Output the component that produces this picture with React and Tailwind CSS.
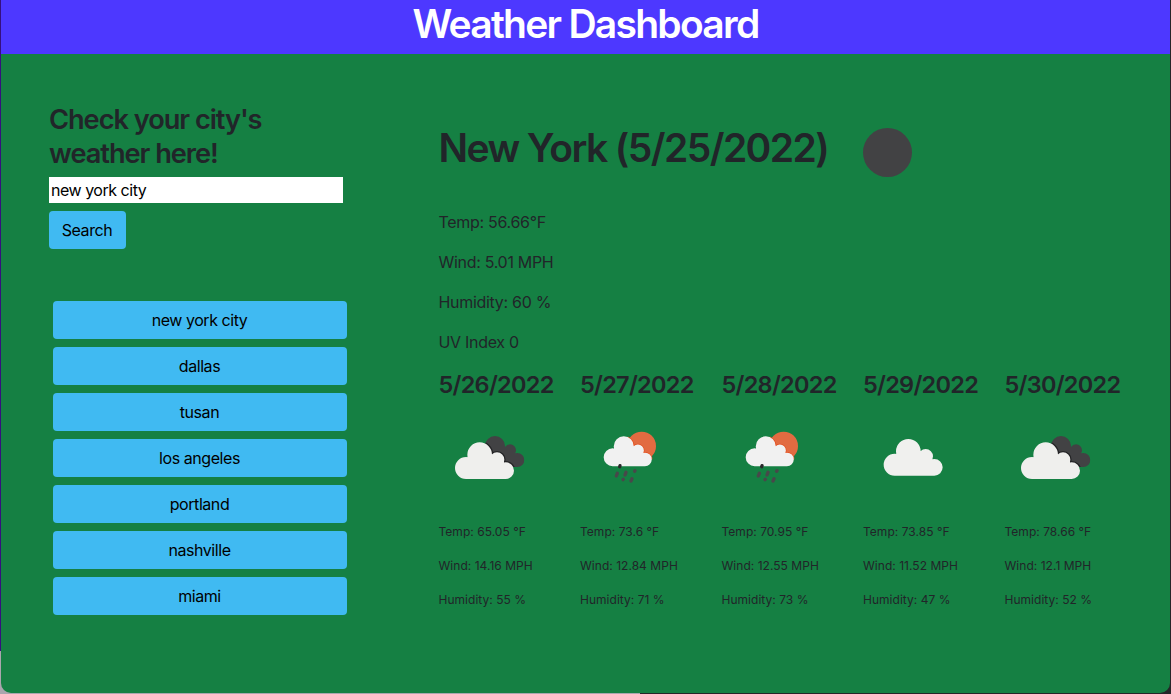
const cities = ["new york city", "dallas", "tusan", "los angeles", "portland", "nashville", "miami"];

const forecast = [
  { date: "5/26/2022", icon: "broken", temp: "65.05", wind: "14.16", humidity: 55 },
  { date: "5/27/2022", icon: "rain", temp: "73.6", wind: "12.84", humidity: 71 },
  { date: "5/28/2022", icon: "rain", temp: "70.95", wind: "12.55", humidity: 73 },
  { date: "5/29/2022", icon: "cloud", temp: "73.85", wind: "11.52", humidity: 47 },
  { date: "5/30/2022", icon: "broken", temp: "78.66", wind: "12.1", humidity: 52 },
];

/* Four puffs, then the body that joins them. */
const CLOUD =
  "M0 77a33 33 0 1 1 66 0a33 33 0 1 1 -66 0Z M37 37a37 37 0 1 1 74 0a37 37 0 1 1 -74 0Z M104 52a22 22 0 1 1 44 0a22 22 0 1 1 -44 0Z M127 85a25 25 0 1 1 50 0a25 25 0 1 1 -50 0Z M33 110V77L74 37L126 52L152 85V110Z";

/* Every icon is drawn in a 300x300 box, three units to a pixel. */
function WeatherIcon({ kind }) {
  return (
    <svg className="size-[100px]" viewBox="0 0 300 300" aria-hidden="true">
      {kind === "broken" && (
        <>
          <clipPath id="backCloud">
            <circle cx="168" cy="108" r="30" />
            <circle cx="213" cy="121" r="18" />
            <circle cx="235" cy="150" r="21" />
            <path d="M168 108L213 121L235 150V171H168Z" />
          </clipPath>
          <g clipPath="url(#backCloud)">
            <rect x="120" y="60" width="160" height="120" fill="#424244" />
            <path d={CLOUD} transform="translate(48 97)" fill="#242426" stroke="#242426" strokeWidth="8" />
          </g>
          <path d={CLOUD} transform="translate(48 97)" fill="#efefed" />
        </>
      )}
      {kind === "rain" && (
        <>
          <circle cx="185" cy="108" r="43" fill="#e26b41" />
          <path d={CLOUD} transform="translate(71 79) scale(.815)" fill="#f1f1f1" stroke="#e45222" strokeWidth="5" clipPath="url(#sunSide)" />
          <path d={CLOUD} transform="translate(71 79) scale(.815)" fill="#f1f1f1" />
          <g stroke="#48484a" strokeWidth="10" strokeLinecap="round">
            <path d="M120 167l-1 3" stroke="#29292b" />
            <path d="M112 190l-3 8M138 187l-3 8M165 182l-1 2M130 208l-1 1M156 206l-3 7" />
          </g>
          <clipPath id="sunSide">
            <path d="M100 -10H200V85H80V10Z" />
          </clipPath>
        </>
      )}
      {kind === "cloud" && <path d={CLOUD} transform="translate(62 87)" fill="#f0f0ee" />}
    </svg>
  );
}

export default function App() {
  return (
    <div className="flex h-[694px] w-[1171px] overflow-hidden bg-[#252528] bg-[linear-gradient(to_right,#aaa6ae_640px,#252528_640px)] font-['Inter',sans-serif] text-[#212529]">
      <div className="h-[651px] w-px bg-[#35107f]" />
      <div className="flex h-[693px] w-[1169px] flex-col overflow-hidden rounded-b-[10px] bg-[#158043]">
        <header className="h-[54px] shrink-0 bg-[#4d38ff] text-center">
          <h1 className="text-[39px] leading-[48px] font-[560] tracking-[-1.73px] text-white">Weather Dashboard</h1>
        </header>
        <main className="flex">
          <aside className="ml-12 w-[298px] pt-[49px]">
            <h2 className="text-[27.2px] leading-[33.6px] font-[560] tracking-[-1.03px]">
              Check your city's
              <br />
              weather here!
            </h2>
            <input
              className="mt-[7px] block h-[26px] w-[294px] bg-white px-0.5 text-base tracking-[-0.48px] text-black outline-none"
              defaultValue="new york city"
            />
            <button className="mt-2 h-[38px] w-[77px] rounded bg-[#40baf2] pr-px text-base tracking-[-0.43px] text-black">Search</button>
            <div className="mt-[52px] ml-1 flex flex-col gap-2">
              {cities.map((city) => (
                <button key={city} className="h-[38px] rounded bg-[#40baf2] pr-px text-base tracking-[-0.44px] text-black">
                  {city}
                </button>
              ))}
            </div>
          </aside>
          <section className="ml-[91.5px] w-[707.5px] pt-[49px]">
            <div className="flex h-[100px] items-start">
              <h2 className="mt-[21px] w-[400px] text-[39px] leading-[48px] font-[560] tracking-[-1.57px] whitespace-nowrap">
                New York (5/25/2022)
              </h2>
              <svg className="size-[100px]" viewBox="0 0 100 100" aria-hidden="true">
                <circle cx="48.500" cy="49.500" r="24.500" fill="#424244" />
              </svg>
            </div>
            <div className="mt-[7px] flex flex-col gap-4 text-base leading-6 tracking-[-0.3px]">
              <p>Temp: 56.66°F</p>
              <p>Wind: 5.01 MPH</p>
              <p>Humidity: 60 %</p>
              <p>UV Index 0</p>
            </div>
            <div className="mt-4 grid grid-cols-5">
              {forecast.map((day) => (
                <article key={day.date}>
                  <h3 className="text-[23.5px] leading-[29px] font-[560] tracking-[-0.74px] whitespace-nowrap">{day.date}</h3>
                  <div className="mt-[11px]">
                    <WeatherIcon kind={day.icon} />
                  </div>
                  <div className="mt-[13px] flex flex-col gap-4 text-xs leading-[18px] tracking-[0.03px]">
                    <p>Temp: {day.temp} °F</p>
                    <p>Wind: {day.wind} MPH</p>
                    <p>Humidity: {day.humidity} %</p>
                  </div>
                </article>
              ))}
            </div>
          </section>
        </main>
      </div>
    </div>
  );
}
